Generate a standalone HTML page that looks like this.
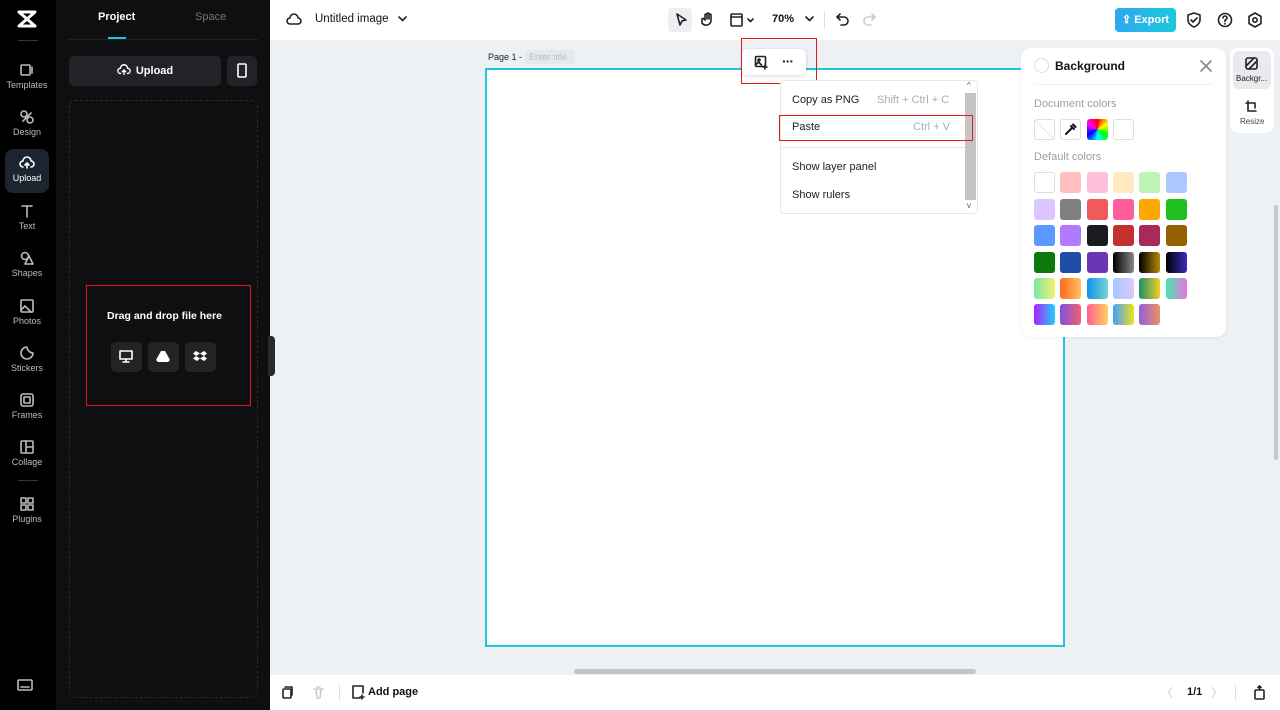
<!DOCTYPE html>
<html><head><meta charset="utf-8"><style>
*{box-sizing:border-box;margin:0;padding:0}
body{width:1280px;height:710px;overflow:hidden;font-family:"Liberation Sans",sans-serif;background:#eef1f4;position:relative}
.abs{position:absolute}
#side{left:0;top:0;width:56px;height:710px;background:#000}
.si{position:absolute;left:5px;width:44px;height:44px;color:#bbb;font-size:9px;text-align:center}
.si svg{display:block;margin:6px auto 2px}
#panel{left:56px;top:0;width:214px;height:710px;background:#0f0f11}
#top{left:270px;top:0;width:1010px;height:40px;background:#fff}
#bot{left:270px;top:675px;width:1010px;height:35px;background:#fff}
svg{fill:none;stroke:currentColor;stroke-width:1.6;stroke-linecap:round;stroke-linejoin:round}
.sw{position:absolute;width:21px;height:21px;border-radius:3px}
</style></head><body>
<div id="side" class="abs">
 <svg class="abs" style="left:16px;top:9px" width="22" height="20" viewBox="0 0 22 20"><path d="M3 3h16L3 17h16M3 3l16 14" stroke="#fff" stroke-width="3"/></svg>
 <div class="abs" style="left:18px;top:40px;width:20px;height:1px;background:#333"></div>
 <div class="si" style="top:56px"><svg width="16" height="16" viewBox="0 0 16 16"><rect x="2" y="3" width="9" height="10" rx="1"/><path d="M13 5v6"/></svg>Templates</div>
 <div class="si" style="top:103px"><svg width="16" height="16" viewBox="0 0 16 16"><circle cx="5" cy="5" r="3"/><circle cx="11" cy="11" r="3"/><path d="M4 12l8-8"/></svg>Design</div>
 <div class="si" style="top:149px;background:#1c2430;border-radius:8px;color:#fff"><svg width="16" height="16" viewBox="0 0 16 16"><path d="M4 12a3 3 0 0 1 0-6 4 4 0 0 1 8 0 3 3 0 0 1 0 6M8 13V8M6 10l2-2 2 2"/></svg>Upload</div>
 <div class="si" style="top:197px"><svg width="16" height="16" viewBox="0 0 16 16"><path d="M3 3h10M8 3v11"/></svg>Text</div>
 <div class="si" style="top:244px"><svg width="16" height="16" viewBox="0 0 16 16"><circle cx="6" cy="6" r="3.5"/><path d="M10 6l4 8H6z"/></svg>Shapes</div>
 <div class="si" style="top:292px"><svg width="16" height="16" viewBox="0 0 16 16"><rect x="2" y="2" width="12" height="12" rx="1"/><path d="M2 12l4-4 6 6"/></svg>Photos</div>
 <div class="si" style="top:339px"><svg width="16" height="16" viewBox="0 0 16 16"><path d="M14 8a6 6 0 1 1-6-6c0 3 3 6 6 6z"/></svg>Stickers</div>
 <div class="si" style="top:386px"><svg width="16" height="16" viewBox="0 0 16 16"><rect x="2" y="2" width="12" height="12" rx="2"/><rect x="5" y="5" width="6" height="6"/></svg>Frames</div>
 <div class="si" style="top:433px"><svg width="16" height="16" viewBox="0 0 16 16"><rect x="2" y="2" width="12" height="12" rx="1"/><path d="M7 2v12M7 8h7"/></svg>Collage</div>
 <div class="abs" style="left:18px;top:480px;width:20px;height:1px;background:#333"></div>
 <div class="si" style="top:490px"><svg width="16" height="16" viewBox="0 0 16 16"><rect x="2" y="2" width="5" height="5"/><rect x="9" y="2" width="5" height="5"/><rect x="2" y="9" width="5" height="5"/><rect x="9" y="9" width="5" height="5"/></svg>Plugins</div>
 <svg class="abs" style="left:17px;top:679px;color:#bbb" width="16" height="12" viewBox="0 0 16 12"><rect x="1" y="1" width="14" height="10" rx="1"/><path d="M4 8h8"/></svg>
</div>
<div id="panel" class="abs">
 <div class="abs" style="left:42px;top:11px;color:#fff;font-size:11px;font-weight:bold">Project</div>
 <div class="abs" style="left:139px;top:11px;color:#777;font-size:11px">Space</div>
 <div class="abs" style="left:12px;top:39px;width:190px;height:1px;background:#222"></div>
 <div class="abs" style="left:52px;top:37px;width:18px;height:2px;background:#1fc8db"></div>
 <div class="abs" style="left:13px;top:56px;width:152px;height:30px;background:#222327;border-radius:5px;color:#fff;font-size:11px;font-weight:bold;text-align:center;line-height:30px"><svg style="vertical-align:-3px;margin-right:5px" width="14" height="14" viewBox="0 0 16 16"><path d="M4 12a3 3 0 0 1 0-6 4 4 0 0 1 8 0 3 3 0 0 1 0 6M8 13V8M6 10l2-2 2 2"/></svg>Upload</div>
 <div class="abs" style="left:171px;top:56px;width:30px;height:30px;background:#222327;border-radius:5px;color:#fff"><svg style="margin:7px 9px" width="12" height="16" viewBox="0 0 12 16"><rect x="2" y="1" width="8" height="13" rx="1"/></svg></div>
 <div class="abs" style="left:13px;top:100px;width:189px;height:598px;border:1px dashed #2a2a2e;border-radius:6px"></div>
 <div class="abs" style="left:30px;top:285px;width:165px;height:121px;border:1.5px solid #e0191f"></div>
 <div class="abs" style="left:51px;top:310px;color:#fff;font-size:10.5px;font-weight:bold">Drag and drop file here</div>
 <div class="abs" style="left:55px;top:342px;width:31px;height:30px;background:#232326;border-radius:5px;color:#fff"><svg style="margin:8px" width="14" height="13" viewBox="0 0 14 13"><rect x="1" y="1" width="12" height="8"/><path d="M7 9v3M4 12h6"/></svg></div>
 <div class="abs" style="left:92px;top:342px;width:31px;height:30px;background:#232326;border-radius:5px"><svg style="margin:8px" width="14" height="13" viewBox="0 0 14 13"><path d="M5 1h4l5 9-2 2H2L0 10z" fill="#fff" stroke="none"/></svg></div>
 <div class="abs" style="left:129px;top:342px;width:31px;height:30px;background:#232326;border-radius:5px"><svg style="margin:8px" width="14" height="13" viewBox="0 0 14 13"><path d="M3 1l4 2.5-4 2.5-3-2.5zM11 1l3 2.5-3 2.5-4-2.5zM3 6l4 2.5L4 11 0 8.5zM11 6l3 2.5-3 2.5-4-2.5z" fill="#fff" stroke="none"/></svg></div>
</div>
<div class="abs" style="left:268px;top:336px;width:7px;height:40px;background:#2a2a2e;border-radius:0 4px 4px 0"></div>
<div id="top" class="abs">
 <svg class="abs" style="left:16px;top:12px;color:#222" width="16" height="16" viewBox="0 0 16 16"><path d="M4 12a3 3 0 0 1 0-6 4 4 0 0 1 8 0 3 3 0 0 1 0 6z"/></svg>
 <div class="abs" style="left:45px;top:13px;font-size:11.5px;color:#111">Untitled image</div>
 <svg class="abs" style="left:128px;top:16px;color:#222" width="9" height="6" viewBox="0 0 9 6"><path d="M1 1l3.5 3.5L8 1"/></svg>
 <div class="abs" style="left:398px;top:8px;width:24px;height:24px;background:#eceef1;border-radius:4px"></div>
 <svg class="abs" style="left:404px;top:12px;color:#222" width="14" height="16" viewBox="0 0 14 16"><path d="M3 2l9 6-4 1-2 4z"/></svg>
 <svg class="abs" style="left:430px;top:11px;color:#222" width="16" height="17" viewBox="0 0 16 17"><path d="M5 9V4a1 1 0 0 1 2 0v4V3a1 1 0 0 1 2 0v5V4a1 1 0 0 1 2 0v6a5 5 0 0 1-9 2L2 9a1 1 0 0 1 2-1l1 1"/></svg>
 <svg class="abs" style="left:460px;top:12px;color:#222" width="26" height="16" viewBox="0 0 26 16"><rect x="1" y="2" width="11" height="12" rx="1"/><path d="M1 5h11M18 7l2.5 2.5L23 7"/></svg>
 <div class="abs" style="left:502px;top:13px;font-size:11px;font-weight:bold;color:#111">70%</div>
 <svg class="abs" style="left:535px;top:16px;color:#222" width="9" height="6" viewBox="0 0 9 6"><path d="M1 1l3.5 3.5L8 1"/></svg>
 <div class="abs" style="left:554px;top:12px;width:1px;height:16px;background:#ddd"></div>
 <svg class="abs" style="left:566px;top:12px;color:#222" width="14" height="15" viewBox="0 0 14 15"><path d="M4 2L1 5l3 3M1 5h7a4 4 0 0 1 0 8H5"/></svg>
 <svg class="abs" style="left:592px;top:12px;color:#ccc" width="14" height="15" viewBox="0 0 14 15"><path d="M10 2l3 3-3 3M13 5H6a4 4 0 0 0 0 8h3"/></svg>
 <div class="abs" style="left:845px;top:8px;width:61px;height:24px;border-radius:4px;background:linear-gradient(90deg,#2ea8f0,#1cc8dc);color:#fff;font-size:11px;font-weight:bold;line-height:24px;text-align:center">⇪ Export</div>
 <svg class="abs" style="left:917px;top:12px;color:#222" width="14" height="16" viewBox="0 0 14 16"><path d="M7 1l6 2v5c0 3-3 6-6 7-3-1-6-4-6-7V3zM4 8l2 2 4-4"/></svg>
 <svg class="abs" style="left:947px;top:12px;color:#222" width="16" height="16" viewBox="0 0 16 16"><circle cx="8" cy="8" r="6.5"/><path d="M6 6a2 2 0 1 1 2 2v1.5M8 11.5v.5"/></svg>
 <svg class="abs" style="left:977px;top:12px;color:#222" width="16" height="16" viewBox="0 0 16 16"><path d="M8 1l6 3.5v7L8 15l-6-3.5v-7z"/><circle cx="8" cy="8" r="2.2"/></svg>
</div>
<div class="abs" style="left:488px;top:52px;font-size:9px;color:#222">Page 1 -</div>
<div class="abs" style="left:525px;top:50px;width:50px;height:14px;background:#e6e9ec;border-radius:2px;font-size:9px;color:#bbb;line-height:14px;padding-left:4px">Enter title</div>
<div class="abs" style="left:485px;top:68px;width:580px;height:579px;background:#fff;border:2px solid #1fc6dc"></div>
<div class="abs" style="left:742px;top:49px;width:64px;height:26px;background:#fff;border-radius:6px;box-shadow:0 1px 4px rgba(0,0,0,.15)"></div>
<svg class="abs" style="left:754px;top:55px;color:#222" width="15" height="15" viewBox="0 0 15 15"><rect x="1.5" y="1.5" width="10" height="10" rx="1"/><circle cx="5" cy="5" r="1"/><path d="M1.5 10l3-3 3 3M11 10v4M9 12h4"/></svg>
<div class="abs" style="left:782px;top:53px;font-size:14px;font-weight:bold;color:#222;letter-spacing:-1px">···</div>
<div class="abs" style="left:741px;top:38px;width:76px;height:46px;border:1.5px solid #e0191f"></div>
<div class="abs" style="left:780px;top:80px;width:198px;height:134px;background:#fff;border:1px solid #e4e6e9;border-radius:4px"></div>
<div class="abs" style="left:965px;top:93px;width:11px;height:107px;background:#c4c4c4"></div>
<div class="abs" style="left:967px;top:81px;font-size:8px;color:#555">^</div>
<div class="abs" style="left:967px;top:201px;font-size:8px;color:#555">v</div>
<div class="abs" style="left:792px;top:94px;font-size:11px;color:#222">Copy as PNG</div>
<div class="abs" style="left:877px;top:94px;font-size:11px;color:#aab">Shift + Ctrl + C</div>
<div class="abs" style="left:792px;top:121px;font-size:11px;color:#222">Paste</div>
<div class="abs" style="left:913px;top:121px;font-size:11px;color:#aab">Ctrl + V</div>
<div class="abs" style="left:779px;top:115px;width:194px;height:26px;border:1.5px solid #e0191f"></div>
<div class="abs" style="left:781px;top:147px;width:184px;height:1px;background:#e4e6e9"></div>
<div class="abs" style="left:792px;top:161px;font-size:11px;color:#222">Show layer panel</div>
<div class="abs" style="left:792px;top:189px;font-size:11px;color:#222">Show rulers</div>
<div class="abs" style="left:1021px;top:48px;width:205px;height:289px;background:#fff;border-radius:10px;box-shadow:0 1px 4px rgba(0,0,0,.06)"></div>
<div class="abs" style="left:1034px;top:58px;width:15px;height:15px;border:1px solid #ddd;border-radius:50%"></div>
<div class="abs" style="left:1055px;top:59px;font-size:12px;font-weight:bold;color:#111">Background</div>
<svg class="abs" style="left:1200px;top:60px;color:#888" width="12" height="12" viewBox="0 0 12 12"><path d="M1 1l10 10M11 1L1 11"/></svg>
<div class="abs" style="left:1034px;top:84px;width:178px;height:1px;background:#eef0f2"></div>
<div class="abs" style="left:1034px;top:98px;font-size:11px;color:#9aa0a8">Document colors</div>
<div class="sw" style="left:1034px;top:119px;border:1px solid #ddd;background:linear-gradient(45deg,#fff 48%,#ccc 50%,#fff 52%)"></div>
<div class="sw" style="left:1060px;top:119px;border:1px solid #ddd"><svg style="margin:3px" width="13" height="13" viewBox="0 0 13 13"><path d="M2 11l6-6M7 3l3 3M9 1.5l2.5 2.5" stroke="#111" stroke-width="2"/></svg></div>
<div class="sw" style="left:1087px;top:119px;background:conic-gradient(red,yellow,lime,cyan,blue,magenta,red)"></div>
<div class="sw" style="left:1113px;top:119px;border:1px solid #ddd"></div>
<div class="abs" style="left:1034px;top:151px;font-size:11px;color:#9aa0a8">Default colors</div>
<div class="sw" style="left:1034px;top:172px;border:1px solid #ddd;background:#fff"></div>
<div class="sw" style="left:1060px;top:172px;background:#ffbfbf"></div>
<div class="sw" style="left:1087px;top:172px;background:#ffc0dc"></div>
<div class="sw" style="left:1113px;top:172px;background:#ffe9be"></div>
<div class="sw" style="left:1139px;top:172px;background:#bcf5b6"></div>
<div class="sw" style="left:1166px;top:172px;background:#abc8ff"></div>
<div class="sw" style="left:1034px;top:199px;background:#dcc6ff"></div>
<div class="sw" style="left:1060px;top:199px;background:#808080"></div>
<div class="sw" style="left:1087px;top:199px;background:#f05a5a"></div>
<div class="sw" style="left:1113px;top:199px;background:#ff5e9c"></div>
<div class="sw" style="left:1139px;top:199px;background:#fba800"></div>
<div class="sw" style="left:1166px;top:199px;background:#1fbf1f"></div>
<div class="sw" style="left:1034px;top:225px;background:#5b98ff"></div>
<div class="sw" style="left:1060px;top:225px;background:#b27aff"></div>
<div class="sw" style="left:1087px;top:225px;background:#1a1b1f"></div>
<div class="sw" style="left:1113px;top:225px;background:#c33030"></div>
<div class="sw" style="left:1139px;top:225px;background:#a62b58"></div>
<div class="sw" style="left:1166px;top:225px;background:#946000"></div>
<div class="sw" style="left:1034px;top:252px;background:#0b7a0b"></div>
<div class="sw" style="left:1060px;top:252px;background:#1f4ea8"></div>
<div class="sw" style="left:1087px;top:252px;background:#6b35b5"></div>
<div class="sw" style="left:1113px;top:252px;background:linear-gradient(90deg,#000,#888)"></div>
<div class="sw" style="left:1139px;top:252px;background:linear-gradient(90deg,#000,#b8860b)"></div>
<div class="sw" style="left:1166px;top:252px;background:linear-gradient(90deg,#000,#3a2cc0)"></div>
<div class="sw" style="left:1034px;top:278px;background:linear-gradient(90deg,#7de8a0,#f0f070)"></div>
<div class="sw" style="left:1060px;top:278px;background:linear-gradient(90deg,#ff6a20,#ffc060)"></div>
<div class="sw" style="left:1087px;top:278px;background:linear-gradient(90deg,#1090e8,#70d8d0)"></div>
<div class="sw" style="left:1113px;top:278px;background:linear-gradient(90deg,#a0c8ff,#e0c8ff)"></div>
<div class="sw" style="left:1139px;top:278px;background:linear-gradient(90deg,#1a9070,#f0d020)"></div>
<div class="sw" style="left:1166px;top:278px;background:linear-gradient(90deg,#40e8b0,#f070e0)"></div>
<div class="sw" style="left:1034px;top:304px;background:linear-gradient(90deg,#b020ff,#20d0ff)"></div>
<div class="sw" style="left:1060px;top:304px;background:linear-gradient(90deg,#8050e0,#f06070)"></div>
<div class="sw" style="left:1087px;top:304px;background:linear-gradient(90deg,#ff6090,#ffd060)"></div>
<div class="sw" style="left:1113px;top:304px;background:linear-gradient(90deg,#40a0ff,#f0e020)"></div>
<div class="sw" style="left:1139px;top:304px;background:linear-gradient(90deg,#9060e0,#f09060)"></div>
<div class="abs" style="left:1230px;top:48px;width:44px;height:85px;background:#fff;border-radius:8px"></div>
<div class="abs" style="left:1233px;top:51px;width:38px;height:38px;background:#e8eaed;border-radius:6px"></div>
<svg class="abs" style="left:1245px;top:57px;color:#222" width="13" height="13" viewBox="0 0 13 13"><rect x="1" y="1" width="11" height="11" rx="2"/><path d="M1 9l8-8M4 12l8-8"/></svg>
<div class="abs" style="left:1236px;top:74px;font-size:8px;color:#222">Backgr...</div>
<svg class="abs" style="left:1245px;top:100px;color:#222" width="13" height="13" viewBox="0 0 13 13"><path d="M3 1v10h8M1 3h9v5"/></svg>
<div class="abs" style="left:1240px;top:117px;font-size:8px;color:#444">Resize</div>
<div class="abs" style="left:1274px;top:205px;width:4px;height:255px;background:#c6c8cb;border-radius:2px"></div>
<div class="abs" style="left:574px;top:669px;width:402px;height:5px;background:#c3c6c9;border-radius:3px"></div>
<div id="bot" class="abs">
 <svg class="abs" style="left:12px;top:11px;color:#222" width="12" height="13" viewBox="0 0 12 13"><rect x="1" y="3" width="8" height="9" rx="1"/><path d="M3 1h7v8"/></svg>
 <svg class="abs" style="left:43px;top:11px;color:#ccc" width="11" height="13" viewBox="0 0 11 13"><path d="M1 3h9M3 3l1 9h3l1-9M4 1h3"/></svg>
 <div class="abs" style="left:69px;top:10px;width:1px;height:15px;background:#ddd"></div>
 <svg class="abs" style="left:81px;top:10px;color:#222" width="14" height="15" viewBox="0 0 14 15"><path d="M9 13H2V1h10v7M11 10v4M9 12h4"/></svg>
 <div class="abs" style="left:98px;top:11px;font-size:11px;font-weight:bold;color:#111">Add page</div>
 <div class="abs" style="left:891px;top:9px;font-size:12px;color:#ccc">〈</div>
 <div class="abs" style="left:917px;top:11px;font-size:11px;font-weight:bold;color:#111">1/1</div>
 <div class="abs" style="left:941px;top:9px;font-size:12px;color:#ccc">〉</div>
 <div class="abs" style="left:965px;top:10px;width:1px;height:15px;background:#ddd"></div>
 <svg class="abs" style="left:984px;top:10px;color:#222" width="11" height="15" viewBox="0 0 11 15"><rect x="1" y="5" width="9" height="9" rx="1"/><path d="M5.5 1v3M4 2.5l1.5-1.5L7 2.5"/></svg>
</div>
</body></html>
